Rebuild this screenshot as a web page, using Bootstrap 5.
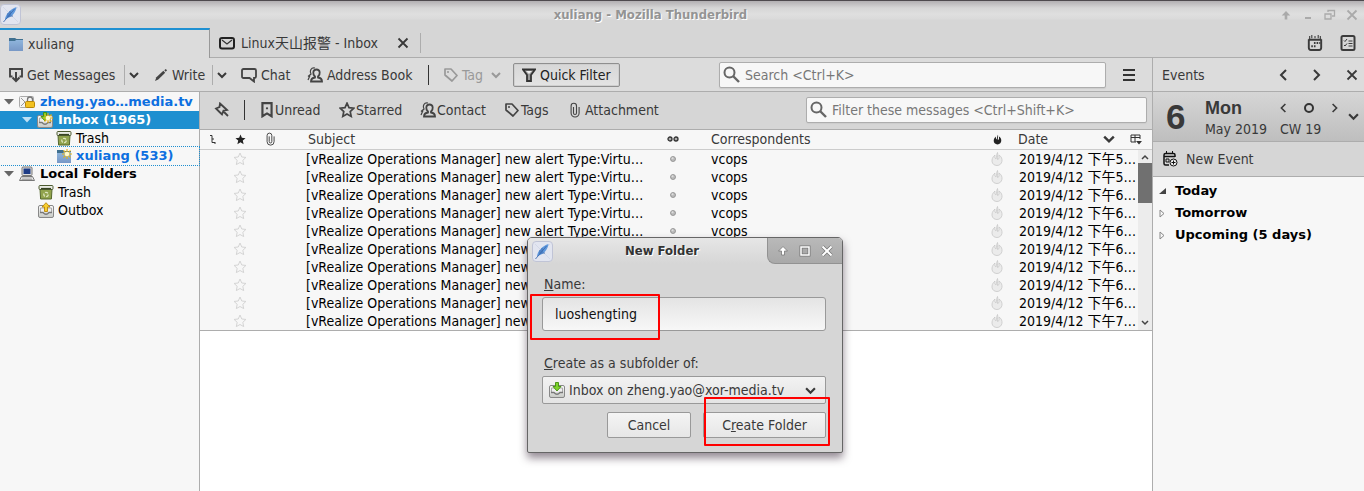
<!DOCTYPE html>
<html lang="en">
<head>
<meta charset="utf-8">
<meta name="viewport" content="width=device-width, initial-scale=1">
<title>xuliang - Mozilla Thunderbird</title>
<link href="https://cdn.jsdelivr.net/npm/bootstrap@5.3.0/dist/css/bootstrap.min.css" rel="stylesheet">
<style>
:root{--ui:"DejaVu Sans Condensed","Noto Sans CJK SC",sans-serif;--strong:"DejaVu Sans","Noto Sans CJK SC",sans-serif;--line:#adadad;--ink:#393939}
body{font:14px/18px var(--ui);color:var(--ink);background:#fff;overflow:hidden}
button,input{font:inherit;color:inherit}
svg{flex:none;display:block}
.heavy{font:bold 13px/18px var(--strong)}
.caption-font{font:bold 13px/18px var(--ui)}
.plain{border:0;background:none;padding:0;display:flex;align-items:center;gap:4px;white-space:nowrap;text-align:left}
.titlebar{height:28px;border-top:1px solid #4e4a4e;background:linear-gradient(#b2afb2,#d6d6d6 7px,#dfdfdf 13px,#dadada 18px,#d6d6d6 19px);color:#949494;text-shadow:1px 1px #fff}
.titlebar .caption-text{font-size:13px}
.app-icon{width:21px;height:21px}
.wm{gap:10px;color:#aaa;padding-right:6px}
.tabstrip{height:30px;background:#d6d6d6}
.tab-on{width:210px;border-top:2px solid #1e90d2;border-right:1px solid #999;background:#dcdcdc;padding:0 8px}
.tab-off{flex:1;border-bottom:1px solid var(--line);padding-left:9px}
.tab-off .tab-title{width:162px;padding-left:6px}
.vline{width:1px;height:20px;background:var(--line)}
.tab-end{margin-left:11px}
.vdark{width:1px;height:20px;background:#333}
.toolbar{height:34px;background:#dcdcdc;border-bottom:1px solid var(--line);display:grid;align-items:center;grid-template-columns:115px 31px 57px 29px 66px 121px 16px 69px 107px 99px 1fr 46px;padding-left:9px}
.off{color:#999}
.quick{height:24px;border:1px solid #8f8f8f;border-radius:2px;background:linear-gradient(#d7d7d7,#e3e3e3);padding:0 8px;box-shadow:inset 0 0 0 1px #cfcfcf;color:#222}
.searchbox{height:26px;border:1px solid var(--line);border-radius:2px;background:#f7f7f7;padding-left:3px;display:flex;align-items:center;gap:5px;box-shadow:0 1px 1px #ccc}
.searchbox input{border:0;background:none;outline:0;padding:0;width:100%;min-width:0}
.searchbox input::placeholder{color:#777;opacity:1}
.pane{min-width:0}
.tree{width:200px;flex:none;background:#f7f7f7;border-right:1px solid var(--line);color:#000;padding-top:1px}
.tree a{height:18px;display:flex;align-items:center;gap:5px;color:#000;text-decoration:none;white-space:nowrap;padding-left:4px}
.tree a.lv1{padding-left:22px}.tree a.lv1s{padding-left:38px;gap:4px}.tree a.lv2{padding-left:56px;gap:4px}
.tree a.unread{color:#0d6fe0}
.tree a.picked{background:#1e8fd0;color:#fff}
.tree a.dropped{outline:1px dotted #1e8fd0}
.filterbar{height:38px;background:#d6d6d6;border-bottom:1px solid var(--line);display:grid;align-items:center;grid-template-columns:30px 16px 79px 81px 84px 66px 126px 110px 1fr;padding:0 5px 2px 14px}
.filterbar .plain{gap:1px}
.mail{table-layout:fixed;width:100%;border-collapse:collapse;background:#f7f7f7;color:#000}
.mail th{height:19px;font-weight:normal;color:var(--ink);padding:0;border-bottom:1px solid #ccc}
.mail td{height:18px;padding:0;white-space:nowrap;overflow:hidden}
.mail tbody tr:first-child td{border-top:1px solid #f7f7f7}
.mail svg{margin:0 auto}
.mail .from{padding-left:21px}
.mail th.subj{padding-left:22px}.mail td.subj{padding-left:20px}
.mail th.when{padding-left:8px}.mail td.when{padding-left:9px}
.mail .scrollcell{background:#ececec;vertical-align:top}
.faint{color:#d2d2d2;--sw:1.100}
.sbar{display:flex;flex-direction:column;height:180px}
.sbar .thumb{height:40px;background:#707070}
.listpane{border-bottom:1px solid var(--line)}
.events{width:212px;flex:none;border-left:1px solid var(--line);background:#f7f7f7}
.ev-head{height:34px;background:#dcdcdc;border-bottom:1px solid var(--line);padding:0 6px 0 9px}
.ev-date{height:50px;background:linear-gradient(#d6d6d6,#bebebe);border-bottom:1px solid var(--line);padding:0 5px 0 13px}
.daynum{font:bold 35px/44px "Liberation Sans",sans-serif;width:39px}
.dayname{font:bold 18px/24px "Liberation Sans",sans-serif;width:74px}
.month{width:75px}
.ev-new{height:35px;background:#d6d6d6;border-bottom:1px solid var(--line);padding-left:9px}
.ev-list{padding:3px 6px;color:#000}
.ev-list button{height:22px;gap:9px}
.dialog-win{position:absolute;left:527px;top:237px;width:316px;height:216px;background:#d6d6d6;border:1px solid #666;border-radius:5px 5px 2px 2px;box-shadow:0 5px 9px rgba(40,20,40,.5)}
.dlg-title{height:26px;background:linear-gradient(#e6e6e6,#d6d6d6);border-radius:4px 4px 0 0;color:#333;text-shadow:1px 1px #fff}
.dlg-wm{width:75px;height:26px;background:linear-gradient(#b9b9b9,#a9a9a9);border:solid #929292;border-width:0 0 1px 1px;border-radius:0 4px 0 8px;color:#fff;gap:8px}
.dlg-body{padding:11px 16px 0 14px}
.dlg-body label{padding-left:2px;display:block}
.name-input{height:34px;width:100%;border:1px solid #999;border-radius:3px;background:linear-gradient(#e4e4e4,#f7f7f7);padding:0 12px;outline:0;color:#111;margin:4px 0 23px;display:block}
.picker{height:28px;width:100%;border:1px solid #999;border-radius:2px;background:linear-gradient(#f2f2f2,#e4e4e4);padding:0 9px 0 6px;margin:4px 0 8px}
.push{height:26px;border:1px solid #999;border-radius:2px;background:linear-gradient(#f4f4f4,#e6e6e6);justify-content:center}
.push.no{width:84px}.push.yes{width:123px}
.mark-red{position:absolute;border:2px solid #f00;border-radius:1px;pointer-events:none}
.mark-name{left:2px;top:56px;width:130px;height:46px}
.mark-ok{left:176px;top:159px;width:126px;height:49px}
</style>
</head>
<body class="vh-100 d-flex flex-column">
<svg width="0" height="0" class="position-absolute" aria-hidden="true"><defs>
<linearGradient id="gf" x2="0" y2="1"><stop stop-color="#8fb5dc"/><stop offset="1" stop-color="#7898c6"/></linearGradient>
<linearGradient id="gm" x2="0" y2="1"><stop stop-color="#fdfdfd"/><stop offset="1" stop-color="#c6c8c4"/></linearGradient>
<symbol id="feather" viewBox="0 0 21 21"><rect x=".5" y=".5" width="20" height="20" rx="3.500" fill="#e2e5f0" stroke="#c0c4d6"/><path d="M3 3l15 15M18 3L3 18" stroke="#cdd2e2" stroke-width=".7"/><path d="M5 16C5 11 10 5 16.500 3 16 8 12 13 6 15z" fill="#5f98dc"/><path d="M3.500 18L14.500 5M8 13V9M10 11V7M9 12h4" stroke="#3563a8" stroke-width=".8" fill="none"/></symbol>
<symbol id="folder" viewBox="0 0 16 16"><path d="M1 2h6l1.500 1H15v3H1z" fill="#40708f"/><path d="M1 5h6l1-1h7v11H1z" fill="url(#gf)"/></symbol>
<symbol id="mailo" viewBox="0 0 16 14"><rect x="1" y="2" width="14" height="10.500" rx="2" fill="none" stroke="#222" stroke-width="2"/><path d="M3 4l5 4 5-4" fill="none" stroke="#333" stroke-width="1.200"/></symbol>
<symbol id="x" viewBox="0 0 12 12"><path d="M1.500 1.500l9 9M10.500 1.500l-9 9" stroke="currentColor" stroke-width="1.800"/></symbol>
<symbol id="down" viewBox="0 0 10 10"><path d="M1 3l4 4 4-4" fill="none" stroke="currentColor" stroke-width="2"/></symbol>
<symbol id="left" viewBox="0 0 10 12"><path d="M8 1L3 6l5 5" fill="none" stroke="currentColor" stroke-width="2"/></symbol>
<symbol id="right" viewBox="0 0 10 12"><path d="M2 1l5 5-5 5" fill="none" stroke="currentColor" stroke-width="2"/></symbol>
<symbol id="get" viewBox="0 0 14 16"><path d="M3.500 9.500H1V2h12v7.500h-2.500" fill="none" stroke="#444" stroke-width="1.900"/><path d="M7 5v9M3.500 10.500L7 14l3.500-3.500" fill="none" stroke="#444" stroke-width="2"/></symbol>
<symbol id="pen" viewBox="0 0 14 14"><path d="M0 14l1.500-4L9 3l2 2-7.500 7.500z" fill="#444"/><path d="M10 2.500L11.500 1 13 2.500 11.500 4z" fill="#444"/></symbol>
<symbol id="chat" viewBox="0 0 16 16"><path d="M2.500 2h11Q15 2 15 3.500v6q0 1.500-1.500 1.500H13v3.500L8.500 11h-6Q1 11 1 9.500v-6Q1 2 2.500 2z" fill="none" stroke="#444" stroke-width="1.800"/></symbol>
<symbol id="people" viewBox="0 0 16 16"><path d="M9.500 2.500c4 0 4 5 1.500 7v1c3 .5 4 1.500 4 4H4c0-2.500 1-3.500 4-4v-1c-2.500-2-2.500-7 1.500-7z" fill="none" stroke="#444" stroke-width="1.800"/><path d="M8 1C4 0 2.500 4 4 7L1 9.500M3 8.500L1 13" fill="none" stroke="#444" stroke-width="1.200"/></symbol>
<symbol id="tag" viewBox="0 0 14 14"><path d="M1 1h6l6 6.500L8 13 1 7z" fill="none" stroke="currentColor" stroke-width="1.700" stroke-linejoin="round"/><circle cx="4" cy="4" r="1" fill="currentColor"/></symbol>
<symbol id="funnel" viewBox="0 0 14 14"><path d="M1 1.500h12L9 7v6H5V7z" fill="#999" stroke="#333" stroke-width="1.800"/><path d="M4 3h6L7 6z" fill="#eee"/></symbol>
<symbol id="lens" viewBox="0 0 17 17"><circle cx="6.500" cy="6.500" r="5" fill="none" stroke="#666" stroke-width="2"/><path d="M10 10l6 6" stroke="#666" stroke-width="2.400"/></symbol>
<symbol id="pin" viewBox="0 0 15 15"><path d="M6 1.500L13 8l-3.500.5-1.500 4L5.500 10 2 6.500 5.500 5zM10 10l4 4" fill="none" stroke="#444" stroke-width="1.800"/></symbol>
<symbol id="bookm" viewBox="0 0 12 14"><path d="M2 1h8v11.500L6 10l-4 2.500z" fill="none" stroke="#444" stroke-width="1.900"/><circle cx="6" cy="5.500" r="1" fill="#444"/></symbol>
<symbol id="star" viewBox="0 0 16 16"><path d="M8 1.200l2 4.500 4.800.5-3.600 3.300 1 4.900L8 12l-4.200 2.400 1-4.900L1.200 6.200 6 5.700z" fill="none" stroke="currentColor" style="stroke-width:var(--sw,1.700)"/></symbol>
<symbol id="starf" viewBox="0 0 12 12"><path d="M6 .5l1.500 3.700 4 .3-3 2.600.9 4L6 9l-3.400 2.100.9-4-3-2.600 4-.3z" fill="#222"/></symbol>
<symbol id="clip" viewBox="0 0 10 16"><path d="M3.500 5v6a1.500 1.500 0 003 0V4a2.700 2.700 0 00-5.400 0v7a4 4 0 008 0V5" fill="none" stroke="#444" stroke-width="1.100"/></symbol>
<symbol id="flame" viewBox="0 0 12 14"><path d="M6.500.5C7.500 3 6 5 6.500 7.500L8 6.500V3C13 6 11.500 13.500 6 13.500S-1 7 4 3C3.500 5 4 6.500 5 7 5.500 4 5.500 3 6.500.5z"/></symbol>
<symbol id="bullet" viewBox="0 0 6 6"><circle cx="3" cy="3" r="2.500" fill="#bbb" stroke="#8c8c8c" stroke-width=".8"/><circle cx="2.500" cy="2.200" r="1" fill="#ddd"/></symbol>
<symbol id="tri" viewBox="0 0 10 6"><path d="M0 0h10L5 5.500z" fill="currentColor"/></symbol>
<symbol id="acct" viewBox="0 0 16 16"><rect x=".5" y="2.500" width="14" height="11" rx="1" fill="#f4f4f4" stroke="#aaa"/><path d="M2 4l4 4-4 4" fill="none" stroke="#999"/><path d="M8.500 8V5.500a2.500 2.500 0 015 0V8" fill="none" stroke="#777" stroke-width="1.300"/><rect x="6.500" y="7.500" width="9" height="6" rx="1" fill="#f2c11f" stroke="#b88708"/></symbol>
<symbol id="tray" viewBox="0 0 16 16"><rect x=".5" y="3.500" width="15" height="12" rx="1.500" fill="url(#gm)" stroke="#888"/><path d="M2.500 10V6h11v4" fill="#eee" stroke="#aaa"/><path d="M2 10.500h3q3 3.500 6 0h3" fill="none" stroke="#777" stroke-width="1.300"/></symbol>
<symbol id="inbox" viewBox="0 0 16 16"><use href="#tray"/><path d="M6.500.5h3v4H12L8 9 4 4.500h2.500z" fill="#7fd22c" stroke="#3f8d0a" stroke-width=".9"/></symbol>
<symbol id="spark" viewBox="0 0 10 10"><path d="M5 0v10M0 5h10M1.500 1.500l7 7M8.500 1.500l-7 7" stroke="#e6b313" stroke-width="1.100"/><circle cx="5" cy="5" r="2.300" fill="#fffbd0"/></symbol>
<symbol id="inboxnew" viewBox="0 0 16 16"><use href="#inbox"/><use href="#spark" x="6" y="1" width="10" height="10"/></symbol>
<symbol id="foldnew" viewBox="0 0 16 16"><use href="#folder"/><use href="#spark" x="6" y="1" width="10" height="10"/></symbol>
<symbol id="outbox" viewBox="0 0 16 16"><use href="#tray"/><path d="M6.500 9.500h3V5H12L8 .700 4 5h2.500z" fill="#f8cf2f" stroke="#b8860b" stroke-width=".9"/></symbol>
<symbol id="bin" viewBox="0 0 16 16"><path d="M2 5h12l-.6 10H2.600z" fill="#91a34d" stroke="#56682d"/><rect x="1" y="1.500" width="14" height="4" rx="1" fill="#e9ebe3" stroke="#4d5b31"/><path d="M3 4.500h10" stroke="#384422" stroke-width="1.200"/><circle cx="8" cy="10.500" r="2.200" fill="none" stroke="#dfe7c0" stroke-width="1.200" stroke-dasharray="3 1.200"/></symbol>
<symbol id="pc" viewBox="0 0 16 16"><rect x="3" y="1" width="10" height="8.500" rx="1" fill="#ddd" stroke="#777"/><rect x="4.500" y="2.500" width="7" height="5.500" fill="#1e3c86"/><path d="M2.500 10.500h11l2 4H.5z" fill="#eee" stroke="#777"/><path d="M3 12h10M2.500 13.500h11" stroke="#888" stroke-width=".7"/></symbol>
<symbol id="cal" viewBox="0 0 14 15"><path d="M1.200 4v8q0 2 2 2h7.600q2 0 2-2V4M1 4.500h12" fill="none" stroke="#3b3b3b" stroke-width="1.800"/><path d="M4 0v3M7 1v2M10 0v3M2 1v3M12 1v3" stroke="#3b3b3b"/><path d="M6 7.500h6M3.500 10.500h5" stroke="#3b3b3b" stroke-width="2" stroke-dasharray="1.500 1"/></symbol>
<symbol id="tasks" viewBox="0 0 15 16"><rect x="1" y="1" width="13" height="14" rx="1.500" fill="none" stroke="#3b3b3b" stroke-width="2"/><path d="M3.500 5.500l1 1L6.500 4M3.500 10l1 1 2-2.500M8 6h4M8 8.500h4M8 11h4" fill="none" stroke="#3b3b3b"/></symbol>
<symbol id="up" viewBox="0 0 10 10"><path d="M5 1L.700 5.500H3.700V9.500h2.600V5.500h3z" fill="currentColor"/></symbol>
</defs></svg>

<header class="titlebar d-flex align-items-center caption-font">
  <svg class="app-icon"><use href="#feather"/></svg>
  <div class="caption-text flex-fill text-center">xuliang - Mozilla Thunderbird</div>
  <div class="wm d-flex align-items-center">
    <button class="plain" aria-label="Shade"><svg width="12" height="10"><use href="#up"/></svg></button>
    <button class="plain" aria-label="Minimize"><svg width="12" height="10"><path d="M3 8h6" stroke="currentColor" stroke-width="2"/></svg></button>
    <button class="plain" aria-label="Restore"><svg width="12" height="12"><path d="M1 5h6v5H1zM4 3V1.500h6.500V7H8" fill="none" stroke="currentColor" stroke-width="1.300"/></svg></button>
    <button class="plain" aria-label="Close"><svg width="12" height="12"><use href="#x"/></svg></button>
  </div>
</header>

<nav class="tabstrip d-flex">
  <div class="tab-on d-flex align-items-center gap-1"><svg width="16" height="16"><use href="#folder"/></svg><span>xuliang</span></div>
  <div class="tab-off d-flex align-items-center pe-2">
    <svg width="16" height="14"><use href="#mailo"/></svg><span class="tab-title text-nowrap">Linux天山报警 - Inbox</span>
    <button class="plain" aria-label="Close tab"><svg width="12" height="12"><use href="#x"/></svg></button><span class="vline tab-end"></span>
    <span class="flex-fill"></span>
    <button class="plain me-3" aria-label="Calendar"><svg width="18" height="16"><use href="#cal"/></svg></button>
    <button class="plain" aria-label="Tasks"><svg width="16" height="16"><use href="#tasks"/></svg></button>
  </div>
</nav>

<div class="d-flex flex-fill">
<div class="pane flex-fill d-flex flex-column">
  <div class="toolbar">
    <button class="plain"><svg width="14" height="16"><use href="#get"/></svg>Get Messages</button>
    <div class="d-flex align-items-center"><span class="vline"></span><button class="plain ps-1" aria-label="More"><svg width="10" height="10"><use href="#down"/></svg></button></div>
    <button class="plain"><svg width="13" height="13"><use href="#pen"/></svg>Write</button>
    <div class="d-flex align-items-center"><span class="vline"></span><button class="plain ps-1" aria-label="More"><svg width="10" height="10"><use href="#down"/></svg></button></div>
    <button class="plain"><svg width="16" height="16"><use href="#chat"/></svg>Chat</button>
    <button class="plain"><svg width="16" height="16"><use href="#people"/></svg>Address Book</button>
    <span class="vdark"></span>
    <button class="plain off"><svg width="14" height="14"><use href="#tag"/></svg>Tag<svg width="10" height="10" class="ms-1"><use href="#down"/></svg></button>
    <button class="plain quick"><svg width="14" height="14"><use href="#funnel"/></svg>Quick Filter</button>
    <span></span>
    <label class="searchbox"><svg width="17" height="17"><use href="#lens"/></svg><input type="text" aria-label="Search" placeholder="Search &lt;Ctrl+K&gt;"></label>
    <button class="plain justify-content-center" aria-label="Menu"><svg width="12" height="12"><path d="M0 1h12M0 6h12M0 11h12" stroke="#333" stroke-width="2"/></svg></button>
  </div>
  <div class="d-flex flex-fill">
    <nav class="tree">
      <a href="#" class="heavy unread"><svg width="10" height="6" color="#666"><use href="#tri"/></svg><svg width="16" height="16"><use href="#acct"/></svg>zheng.yao…media.tv</a>
      <a href="#" class="lv1 heavy picked"><svg width="10" height="6" color="#bde0f5"><use href="#tri"/></svg><svg width="16" height="16"><use href="#inboxnew"/></svg>Inbox (1965)</a>
      <a href="#" class="lv2"><svg width="16" height="16"><use href="#bin"/></svg>Trash</a>
      <a href="#" class="lv2 heavy unread dropped"><svg width="16" height="16"><use href="#foldnew"/></svg>xuliang (533)</a>
      <a href="#" class="heavy"><svg width="10" height="6" color="#666"><use href="#tri"/></svg><svg width="16" height="16"><use href="#pc"/></svg>Local Folders</a>
      <a href="#" class="lv1s"><svg width="16" height="16"><use href="#bin"/></svg>Trash</a>
      <a href="#" class="lv1s"><svg width="16" height="16"><use href="#outbox"/></svg>Outbox</a>
    </nav>
    <main class="pane flex-fill">
      <div class="filterbar">
        <button class="plain" aria-label="Keep filters"><svg width="15" height="15"><use href="#pin"/></svg></button>
        <span class="vdark"></span>
        <button class="plain"><svg width="14" height="16"><use href="#bookm"/></svg>Unread</button>
        <button class="plain"><svg width="16" height="16" color="#444"><use href="#star"/></svg>Starred</button>
        <button class="plain"><svg width="16" height="16"><use href="#people"/></svg>Contact</button>
        <button class="plain"><svg width="16" height="14" color="#444"><use href="#tag"/></svg>Tags</button>
        <button class="plain"><svg width="10" height="16"><use href="#clip"/></svg><span class="ps-1">Attachment</span></button>
        <span></span>
        <label class="searchbox"><svg width="17" height="17"><use href="#lens"/></svg><input type="text" aria-label="Filter" placeholder="Filter these messages &lt;Ctrl+Shift+K&gt;"></label>
      </div>
      <div class="listpane">
      <table class="mail">
        <colgroup><col style="width:26px"><col style="width:28px"><col style="width:32px"><col><col style="width:34px"><col style="width:294px"><col style="width:26px"><col style="width:109px"><col style="width:19px"><col style="width:14px"></colgroup>
        <thead><tr>
          <th><svg width="6" height="9"><path d="M0 .5h2v7h3M2 4h2M4 8h2" fill="none" stroke="#333"/></svg></th>
          <th><svg width="11" height="11"><use href="#starf"/></svg></th>
          <th><svg width="9" height="14"><use href="#clip"/></svg></th>
          <th class="subj">Subject</th>
          <th><svg width="12" height="6"><circle cx="3" cy="3" r="2" fill="#aaa" stroke="#333" stroke-width="1.300"/><circle cx="9" cy="3" r="2" fill="#aaa" stroke="#333" stroke-width="1.300"/></svg></th>
          <th class="from">Correspondents</th>
          <th><svg width="9" height="11" fill="#222"><use href="#flame"/></svg></th>
          <th class="when"><div class="d-flex align-items-center"><span class="flex-fill">Date</span><svg width="12" height="12" class="me-1"><use href="#down"/></svg></div></th>
          <th colspan="2"><svg width="12" height="11"><path d="M1 1h9v4M1 1v7h5M1 3.500h9M5 1v7" fill="none" stroke="#333"/><path d="M6 7h6L9 10.500z" fill="#333"/></svg></th>
        </tr></thead>
        <tbody id="rows"></tbody>
      </table>
      </div>
    </main>
  </div>
</div>
<aside class="events">
  <div class="ev-head d-flex align-items-center"><span class="flex-fill">Events</span>
    <button class="plain me-4" aria-label="Previous"><svg width="10" height="12"><use href="#left"/></svg></button>
    <button class="plain me-4" aria-label="Next"><svg width="10" height="12"><use href="#right"/></svg></button>
    <button class="plain" aria-label="Close"><svg width="12" height="12"><use href="#x"/></svg></button></div>
  <div class="ev-date d-flex align-items-center">
    <div class="daynum">6</div>
    <div class="flex-fill"><div class="d-flex align-items-center"><span class="dayname">Mon</span>
      <button class="plain" aria-label="Previous day"><svg width="8" height="10"><use href="#left"/></svg></button>
      <button class="plain mx-3" aria-label="Today"><svg width="12" height="12"><circle cx="6" cy="6" r="4" fill="none" stroke="#333" stroke-width="2"/></svg></button>
      <button class="plain" aria-label="Next day"><svg width="8" height="10"><use href="#right"/></svg></button></div>
      <div class="d-flex"><span class="month">May 2019</span>CW 19</div></div>
    <button class="plain" aria-label="Mini month"><svg width="11" height="11"><use href="#down"/></svg></button>
  </div>
  <div class="ev-new d-flex align-items-center"><button class="plain gap-2"><svg width="16" height="16"><path d="M13 6V4q0-1.500-1.500-1.500h-8Q2 2.500 2 4v8.500Q2 14 3.500 14H7M2 5.500h11" fill="none" stroke="#111" stroke-width="1.500"/><path d="M4.500 0v3M10.500 0v3M4 8h3v3H4z" stroke="#111" fill="none"/><circle cx="11.500" cy="11.500" r="3.500" fill="#eee" stroke="#111"/><path d="M9.500 11.500h4M11.500 9.500v4" stroke="#111"/></svg>New Event</button></div>
  <div class="ev-list">
    <button class="plain heavy"><svg width="7" height="8"><path d="M7 1v6H0z" fill="#444"/></svg>Today</button>
    <button class="plain heavy"><svg width="7" height="9"><path d="M1 1v7l4-3.500z" fill="none" stroke="#888"/></svg>Tomorrow</button>
    <button class="plain heavy"><svg width="7" height="9"><path d="M1 1v7l4-3.500z" fill="none" stroke="#888"/></svg>Upcoming (5 days)</button>
  </div>
</aside>
</div>

<section class="dialog-win" role="dialog" aria-labelledby="dlgt">
  <div class="dlg-title d-flex align-items-center">
    <svg class="app-icon ms-1"><use href="#feather"/></svg><div id="dlgt" class="caption-font flex-fill text-center ps-1">New Folder</div>
    <div class="dlg-wm d-flex align-items-center justify-content-center">
      <button class="plain" aria-label="Shade"><svg width="14" height="14" viewBox="-2 -2 14 14"><path d="M5 .5L.500 5H3.500v4h3V5h3z" fill="#fff" stroke="#777" stroke-width=".8"/></svg></button>
      <button class="plain" aria-label="Maximize"><svg width="14" height="14"><path d="M3 3h8v8H3z" fill="#aaa" stroke="#777" stroke-width="3"/><path d="M3 3h8v8H3z" fill="none" stroke="#fff" stroke-width="1.500"/></svg></button>
      <button class="plain" aria-label="Close"><svg width="14" height="14"><path d="M2.500 2.500l9 9M11.500 2.500l-9 9" stroke="#777" stroke-width="3.400"/><path d="M2.500 2.500l9 9M11.500 2.500l-9 9" stroke="#fff" stroke-width="2"/></svg></button>
    </div>
  </div>
  <div class="dlg-body">
    <label for="fname"><u>N</u>ame:</label>
    <input id="fname" class="name-input" type="text" value="luoshengting">
    <label for="parent"><u>C</u>reate as a subfolder of:</label>
    <button id="parent" class="plain picker"><svg width="16" height="16"><use href="#inbox"/></svg><span class="flex-fill">Inbox on zheng.yao@xor-media.tv</span><svg width="11" height="11"><use href="#down"/></svg></button>
    <div class="d-flex justify-content-end gap-2">
      <button class="plain push no me-1">Cancel</button>
      <button class="plain push yes"><span>C<u>r</u>eate Folder</span></button>
    </div>
  </div>
  <span class="mark-red mark-name"></span><span class="mark-red mark-ok"></span>
</section>

<script>
const hours = [5,5,6,6,6,6,6,6,6,7];
document.getElementById('rows').innerHTML = hours.map((h,i) => `<tr><td></td>
<td><svg width="14" height="14" class="faint"><use href="#star"/></svg></td><td></td>
<td class="subj">[vRealize Operations Manager] new alert Type:Virtu…</td>
<td><svg width="6" height="6"><use href="#bullet"/></svg></td>
<td class="from">vcops</td>
<td><svg width="12" height="14" fill="#ebebeb" stroke="#c8c8c8" stroke-width=".8"><use href="#flame"/></svg></td>
<td class="when" colspan="2">2019/4/12 下午${h}…</td>
${i ? '' : '<td class="scrollcell" rowspan="10"><div class="sbar"><svg width="14" height="13"><path d="M4 9l3-3 3 3" fill="none" stroke="#444" stroke-width="1.500"/></svg><div class="thumb"></div><svg class="mt-auto" width="14" height="14"><path d="M4 5l3 3 3-3" fill="none" stroke="#444" stroke-width="1.500"/></svg></div></td>'}</tr>`).join('');
</script>
<script src="https://cdn.jsdelivr.net/npm/bootstrap@5.3.0/dist/js/bootstrap.bundle.min.js"></script>
</body>
</html>
